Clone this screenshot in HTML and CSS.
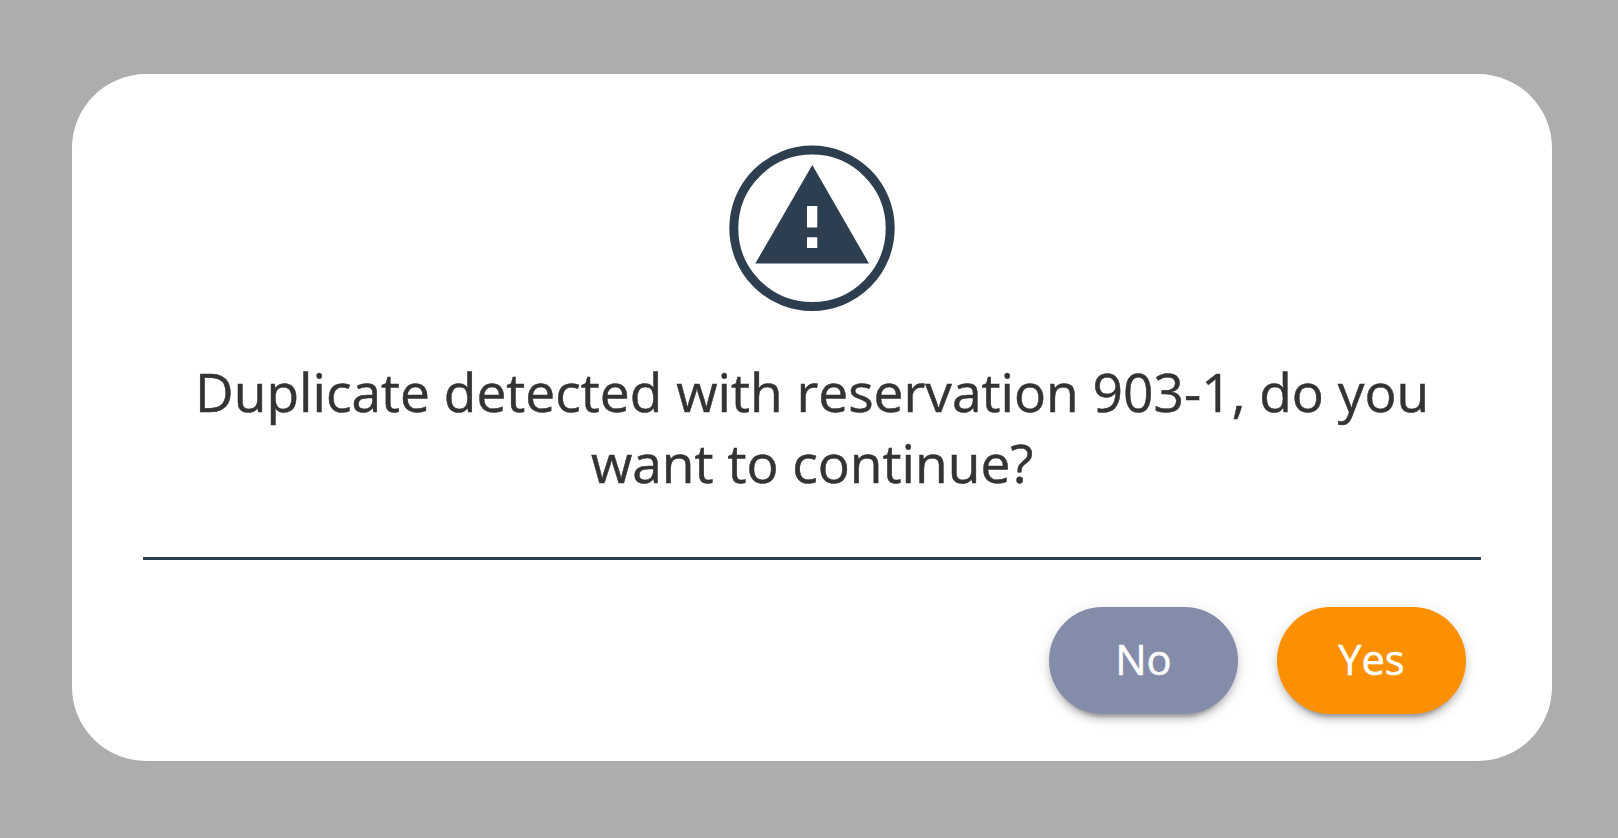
FILE: index.html
```html
<!DOCTYPE html>
<html lang="en">
<head>
<meta charset="utf-8">
<title>Confirm</title>
<link rel="stylesheet" href="styles.css">
</head>
<body>
<main class="dialog" role="alertdialog">
  <svg class="icon" viewBox="0 0 166 166" aria-hidden="true">
    <circle class="ring" cx="83" cy="83.300" r="78.200"/>
    <path class="sign" fill-rule="evenodd" d="M83.300 20L140 118.500H26.300ZM78 61V82.500H88.300V61ZM78 92.200V103H88.300V92.200Z"/>
  </svg>
  <p class="message">Duplicate detected with reservation 903-1, do you want to continue?</p>
  <div class="actions">
    <button class="btn btn-no">No</button>
    <button class="btn btn-yes">Yes</button>
  </div>
</main>
</body>
</html>
```
FILE: styles.css
```css
* { box-sizing: border-box; }
body {
  margin: 0;
  height: 838px;
  padding: 74.400px 66px 0 72.300px;
  background: #adadad;
  font-family: "Open Sans", sans-serif;
}
.dialog {
  display: flex;
  flex-direction: column;
  align-items: center;
  height: 686.500px;
  padding: 70.600px 71px 0;
  border-radius: 74px;
  background: #fff;
}
.icon { width: 166px; height: 166px; flex: none; }
.ring { fill: none; stroke: #2d3e50; stroke-width: 9; }
.sign { fill: #2d3e50; }
.message {
  width: 1290px;
  margin: 45px 0 0;
  color: #333;
  font-size: 53.300px;
  line-height: 71px;
  text-align: center;
  -webkit-text-stroke: .5px currentColor;
}
.actions {
  display: flex;
  justify-content: flex-end;
  gap: 38.500px;
  width: 100%;
  margin-top: 59px;
  padding: 47px 14.800px 0 0;
  border-top: 3px solid #2d3e50;
}
.btn {
  width: 189.500px;
  height: 106.700px;
  border: 0;
  border-radius: 54px;
  padding: 0 0 3px;
  color: #fff;
  font: 500 41.700px "Open Sans", sans-serif;
  -webkit-text-stroke: .5px currentColor;
  box-shadow: 0 9px 3px -6px rgba(0, 0, 0, .2), 0 6px 6px rgba(0, 0, 0, .14), 0 3px 15px rgba(0, 0, 0, .12);
}
.btn-no { background: #838ca9; }
.btn-yes { background: #fd9000; }
```
